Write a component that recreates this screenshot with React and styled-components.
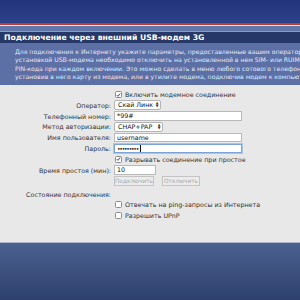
import React from 'react'
import styled, { createGlobalStyle } from 'styled-components'

const GlobalStyle = createGlobalStyle`
  html, body {
    margin: 0;
    padding: 0;
    width: 300px;
    height: 300px;
    overflow: hidden;
    background: #2f426f;
  }
  * { box-sizing: border-box; }
`

const Page = styled.div`
  width: 300px;
  height: 300px;
  display: flex;
  flex-direction: column;
  font-family: "DejaVu Sans", Verdana, sans-serif;
  overflow: hidden;
`

const TopBar = styled.div`
  height: 25px;
  background: linear-gradient(#22347a, #2d428a);
  border-bottom: 2px solid #c23a36;
`

const Strip = styled.div`
  height: 6px;
  border-top: 1px solid #e9ecf4;
  background: #6176a9;
`

const TitleBar = styled.div`
  height: 12px;
  background: #263868;
  border-top: 1px solid #8a9bc4;
  color: #ffffff;
  font-weight: bold;
  font-size: 7.7px;
  line-height: 11px;
  padding-left: 4px;
  white-space: nowrap;
`

const Description = styled.div`
  background: #5c70a6;
  color: #e4e9f6;
  font-size: 6.15px;
  line-height: 8.4px;
  padding: 5px 0 3.5px 15px;
  white-space: nowrap;
`

const Form = styled.div`
  background: #e8e8e8;
  height: 158px;
  padding-top: 4px;
  display: flex;
  flex-direction: column;
  color: #333;
  font-size: 6.35px;
  border-bottom: 1px solid #aeb6c8;
`

const Row = styled.div`
  display: grid;
  grid-template-columns: 111px 1fr;
  column-gap: 3px;
  align-items: center;
  height: 10.8px;
  margin-top: ${({ mt }) => mt || 0}px;
`

const Label = styled.div`
  text-align: right;
  white-space: nowrap;
`

const Field = styled.div`
  display: flex;
  align-items: center;
  gap: 3px;
  white-space: nowrap;
`

const Box = styled.span`
  width: 7px;
  height: 7px;
  border: 1px solid #8c8c8c;
  border-radius: 1.5px;
  background: #fff;
  margin-left: 1px;
  display: flex;
  align-items: center;
  justify-content: center;
`

const Input = styled.div`
  width: ${({ w }) => w}px;
  height: 9.5px;
  background: #fff;
  border: 1px solid ${({ focus }) => (focus ? '#7aa3d6' : '#b9b9b9')};
  box-shadow: ${({ focus }) => (focus ? '0 0 0 1px #a8c6ea' : 'none')};
  color: #111;
  font-size: 6.35px;
  line-height: 8px;
  padding-left: 2px;
  white-space: nowrap;
  overflow: hidden;
`

const Dots = styled.span`
  letter-spacing: -1.2px;
  font-size: 6px;
`

const Caret = styled.span`
  display: inline-block;
  width: 1px;
  height: 7px;
  background: #111;
  margin-left: 1.5px;
  vertical-align: -1px;
`

const Select = styled.div`
  width: ${({ w }) => w}px;
  height: 10px;
  background: #fff;
  border: 1px solid #b4b4b4;
  border-radius: 2px;
  color: #111;
  font-size: 6.35px;
  line-height: 8px;
  padding: 0 1.5px 0 3px;
  display: flex;
  justify-content: space-between;
  align-items: center;
`

const Arrows = styled.span`
  font-size: 3.5px;
  line-height: 3px;
  display: flex;
  flex-direction: column;
  color: #333;
`

const Buttons = styled.div`
  display: flex;
  gap: 8px;
`

const Button = styled.div`
  height: 10px;
  width: ${({ w }) => w}px;
  border: 1px solid #c4c4c4;
  background: #ececec;
  color: #a9a9a9;
  font-size: 5.8px;
  line-height: 8px;
  text-align: center;
`

const Footer = styled.div`
  flex: 1;
  background: linear-gradient(#4b6090, #2e416d);
`

const Check = ({ checked }) => (
  <Box>
    {checked && (
      <svg width="6" height="6" viewBox="0 0 6 6">
        <path d="M1 3.2 L2.4 4.6 L5 1.2" stroke="#2a4f9c" strokeWidth="1.2" fill="none" />
      </svg>
    )}
  </Box>
)

const Arr = () => (
  <Arrows>
    <span>▲</span>
    <span>▼</span>
  </Arrows>
)

export default function App () {
  return (
    <Page>
      <GlobalStyle />
      <TopBar />
      <Strip />
      <TitleBar>Подключение через внешний USB-модем 3G</TitleBar>
      <Description>
        <div>Для подключения к Интернету укажите параметры, предоставленные вашим оператором связи. Перед</div>
        <div>установкой USB-модема необходимо отключить на установленной в нем SIM- или RUIM-карте запрос</div>
        <div>PIN-кода при каждом включении. Это можно сделать в меню любого сотового телефона,</div>
        <div>установив в него карту из модема, или в утилите модема, подключив модем к компьютеру.</div>
      </Description>
      <Form>
        <Row>
          <Label />
          <Field><Check checked />Включить модемное соединение</Field>
        </Row>
        <Row>
          <Label>Оператор:</Label>
          <Field><Select w={47}>Скай Линк<Arr /></Select></Field>
        </Row>
        <Row>
          <Label>Телефонный номер:</Label>
          <Field><Input w={128}>*99#</Input></Field>
        </Row>
        <Row>
          <Label>Метод авторизации:</Label>
          <Field><Select w={49}>CHAP+PAP<Arr /></Select></Field>
        </Row>
        <Row>
          <Label>Имя пользователя:</Label>
          <Field><Input w={128}>username</Input></Field>
        </Row>
        <Row>
          <Label>Пароль:</Label>
          <Field><Input w={128} focus><Dots>•••••••••</Dots><Caret /></Input></Field>
        </Row>
        <Row>
          <Label />
          <Field><Check checked />Разрывать соединение при простое</Field>
        </Row>
        <Row>
          <Label>Время простоя (мин):</Label>
          <Field><Input w={42}>10</Input></Field>
        </Row>
        <Row>
          <Label />
          <Buttons>
            <Button w={40}>Подключить</Button>
            <Button w={38}>Отключить</Button>
          </Buttons>
        </Row>
        <Row mt={2.4}>
          <Label>Состояние подключения:</Label>
          <Field />
        </Row>
        <Row>
          <Label />
          <Field><Check />Отвечать на ping-запросы из Интернета</Field>
        </Row>
        <Row>
          <Label />
          <Field><Check />Разрешить UPnP</Field>
        </Row>
      </Form>
      <Footer />
    </Page>
  )
}
